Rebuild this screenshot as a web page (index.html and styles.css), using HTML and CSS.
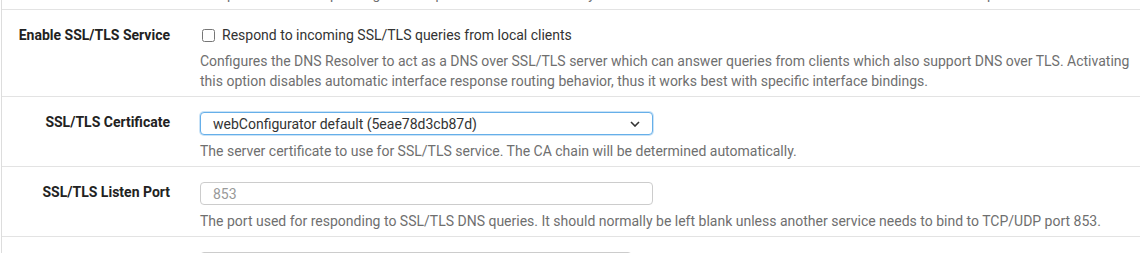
FILE: index.html
```html
<!DOCTYPE html>
<html lang="en">
<head>
  <meta charset="UTF-8">
  <meta name="viewport" content="width=device-width, initial-scale=1.0">
  <title>DNS Resolver - SSL/TLS</title>
  <link rel="stylesheet" href="styles.css">
</head>
<body>
  <div class="panel">
    <div class="row partial">
      <div class="label"></div>
      <div class="field">
        <span class="help">The port used for responding to DNS queries. It should normally be left blank unless another service needs to bind to TCP/UDP port 53.</span>
      </div>
    </div>

    <div class="row">
      <div class="label">Enable SSL/TLS Service</div>
      <div class="field">
        <label class="check"><input type="checkbox"> Respond to incoming SSL/TLS queries from local clients</label>
        <span class="help">Configures the DNS Resolver to act as a DNS over SSL/TLS server which can answer queries from clients which also support DNS over TLS. Activating this option disables automatic interface response routing behavior, thus it works best with specific interface bindings.</span>
      </div>
    </div>

    <div class="row">
      <div class="label">SSL/TLS Certificate</div>
      <div class="field">
        <select class="control focus">
          <option>webConfigurator default (5eae78d3cb87d)</option>
        </select>
        <span class="help">The server certificate to use for SSL/TLS service. The CA chain will be determined automatically.</span>
      </div>
    </div>

    <div class="row">
      <div class="label">SSL/TLS Listen Port</div>
      <div class="field">
        <input class="control" type="text" placeholder="853">
        <span class="help">The port used for responding to SSL/TLS DNS queries. It should normally be left blank unless another service needs to bind to TCP/UDP port 853.</span>
      </div>
    </div>

    <div class="row">
      <div class="label"></div>
      <div class="field">
        <div class="listbox"></div>
      </div>
    </div>
  </div>
</body>
</html>
```

FILE: styles.css
```css
body {
  margin: 0;
  font-family: Roboto, "Liberation Sans", sans-serif;
  font-size: 14px;
  line-height: 20px;
  color: #333;
  background: #fff;
  overflow: hidden;
}
.panel {
  margin-left: 1px;
  border-left: 1px solid #ddd;
}
.row {
  display: grid;
  grid-template-columns: 168px 1fr;
  column-gap: 30px;
  padding: 15px 0 5px 0;
  border-bottom: 1px solid #e3e3e3;
}
.row.partial {
  padding: 0;
}
.row.partial .field {
  height: 9px;
  overflow: hidden;
  justify-content: flex-end;
}
.row.partial .help {
  margin: 0 0 5px;
}
.label {
  text-align: right;
  font-weight: bold;
  color: #222;
  line-height: 20px;
}
.field {
  display: flex;
  flex-direction: column;
  align-items: flex-start;
}
.check {
  display: flex;
  align-items: center;
  gap: 7px;
  color: #333;
}
.check input {
  margin: 0 0 0 2px;
  width: 13px;
  height: 13px;
}
.help {
  display: block;
  margin-top: 6px;
  color: #6f6f6f;
}
.control {
  box-sizing: border-box;
  width: 453px;
  height: 23px;
  margin: 0;
  padding: 0 12px;
  border: 1px solid #ccc;
  border-radius: 4px;
  font-family: inherit;
  font-size: 14px;
  color: #333;
  background: #fff;
}
.control::placeholder {
  color: #999;
}
select.control {
  appearance: none;
  background: #fff url("data:image/svg+xml,%3Csvg xmlns='http://www.w3.org/2000/svg' width='10' height='6' viewBox='0 0 10 6'%3E%3Cpath d='M1 1l4 4 4-4' fill='none' stroke='%23333' stroke-width='1.6'/%3E%3C/svg%3E") no-repeat right 12px center;
}
.focus {
  border-color: #66afe9;
  box-shadow: 0 0 0 1px rgba(102, 175, 233, 0.35);
}
.listbox {
  width: 430px;
  height: 40px;
  border: 1px solid #ccc;
  border-radius: 4px;
  background: #eee;
}
```
